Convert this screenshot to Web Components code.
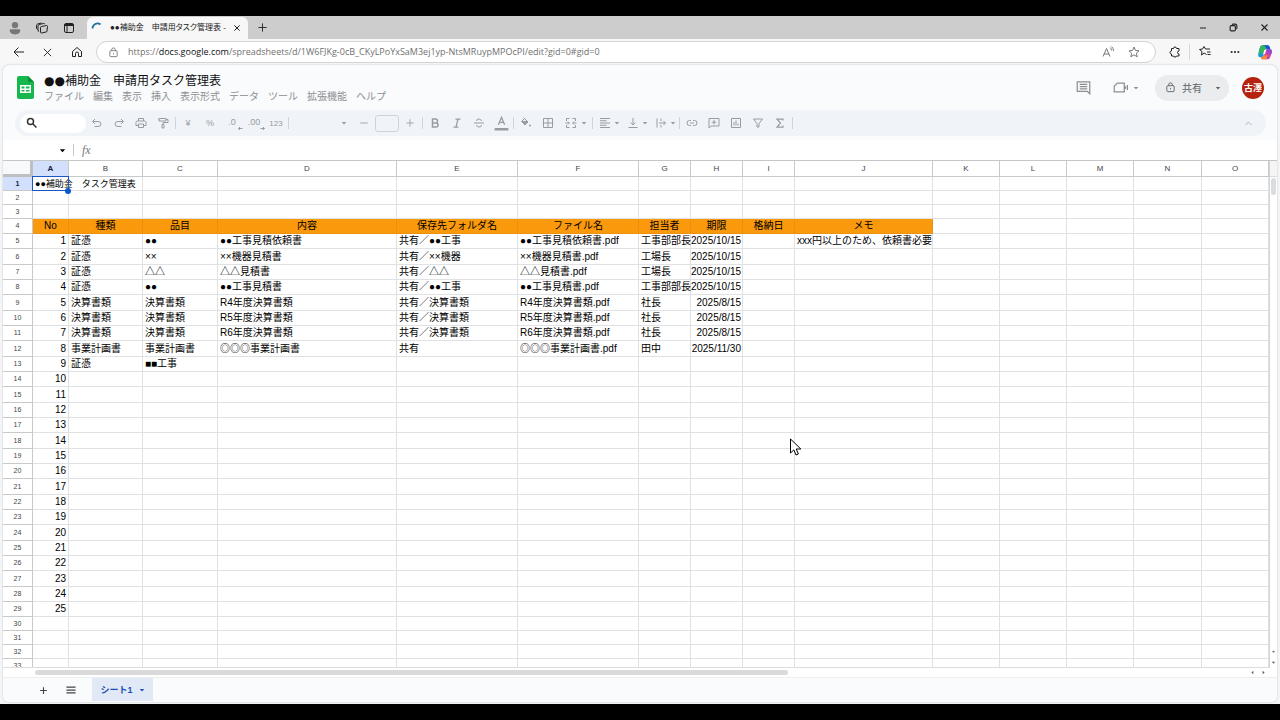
<!DOCTYPE html>
<html lang="ja">
<head>
<meta charset="utf-8">
<meta name="viewport" content="width=device-width, initial-scale=1">
<title>●●補助金　申請用タスク管理表</title>
<style>
    body {
        margin: 0;
        padding: 16px 0;
        box-sizing: border-box;
        height: 100vh;
        background: #000;
        overflow: hidden;
        font-family: "Liberation Sans", "Noto Sans CJK JP", sans-serif;
        font-size: 10px;
        color: #000;
    }

    mouse-cursor {
        position: absolute;
        left: 789px;
        top: 438px;
    }
</style>
</head>
<body>
<browser-frame>
    <tab-strip slot="tabs"></tab-strip>
    <address-bar slot="address"></address-bar>
    <sheet-header></sheet-header>
    <sheet-toolbar></sheet-toolbar>
    <formula-bar></formula-bar>
    <sheet-grid></sheet-grid>
    <sheet-tabs></sheet-tabs>
</browser-frame>
<mouse-cursor></mouse-cursor>

<script>
// all icons sit on a 24x24 grid, stroke based unless a fill is given
const icons = {
    person: `<circle cx="12" cy="7" r="5.5" fill="#777" stroke="none"/><path d="M3 16q0-2 2-2h14q2 0 2 2 0 7-9 7t-9-7z" fill="#777" stroke="none"/>`,
    workspaces: `<path d="M11 9l10-2q2 0 2 2l-1 9q0 2-2 2l-9 2q-2 0-2-2V11q0-2 2-2zM6 19q-2 0-2-3V8q0-2 2-3l9-2q2 0 3 1M3 15q-2-1-2-3V7q0-2 2-3l8-2"/>`,
    tabactions: `<rect x="3" y="3" width="18" height="18" rx="3"/><path d="M3 7h18M8 8v13" /><path d="M3 6h18" stroke-width="4"/>`,
    spinner: `<path d="M3 13a10 10 0 0 1 16-8" stroke="#1d6f9f" stroke-width="3.5"/>`,
    close: `<path d="M4 4l16 16M20 4 4 20"/>`,
    plus: `<path d="M12 3v18M3 12h18"/>`,
    minus: `<path d="M3 12h18"/>`,
    restore: `<rect x="3" y="7" width="14" height="14" rx="3"/><path d="M8 4q1-1 3-1h5q5 0 5 5v5q0 2-1 3"/>`,
    back: `<path d="M22 12H2M11 3l-9 9 9 9"/>`,
    home: `<path d="M3 11l9-8 9 8v10h-6v-6q0-3-3-3t-3 3v6H3z"/>`,
    lock: `<rect x="4" y="8" width="16" height="13" rx="2"/><path d="M8 8V6q0-4 4-4t4 4v2M12 13v3"/>`,
    readaloud: `<path d="M2 21 9 5l7 16M4 16h10M16 3q3 2 3 6M19 1q4 3 4 9"/>`,
    star: `<path d="M12 2l3 7 7 .6-5.300 4.700 1.700 7.200L12 17.600 5.600 21.500 7.300 14.300 2 9.600 9 9z"/>`,
    extension: `<path d="M5 5h4q0-3 3-3t3 3h5v5q-3 0-3 3t3 3v4h-5q0 2-3 2t-3-2H5v-4q-3 0-3-3t3-3z"/>`,
    favorites: `<path d="M15 17l-5-3-5 4 1-7-5-4 6-1 3-5 3 5h9M16 12h7M17 17h6"/>`,
    more: `<g fill="currentColor" stroke="none"><circle cx="4" cy="12" r="2.500"/><circle cx="12" cy="12" r="2.500"/><circle cx="20" cy="12" r="2.500"/></g>`,
    copilot: `<g stroke="none"><path d="M8 2h8q2 0 3 4l1 2h-5q-2 0-3 3l-2 6q-1 3-4 3H5q-4 0-3-5l2-9q1-4 4-4z" fill="#159bd8"/><path d="M4 7q1-5 5-5h6l-3 7-3 5H2z" fill="#35b65c"/><path d="M8 2h8q3 0 4 6h-5l-2-3q-1-3-5-3z" fill="#1456c8"/><path d="M15 8h5q3 0 2 5l-2 6q-1 4-4 4H8q-2 0-2-3 3 0 4-3l2-6q1-3 3-3z" fill="#d63fa5"/><path d="M6 20q3 0 4-3h6l-2 6H8q-2 0-2-3z" fill="#f38b35"/><path d="M15 8h5q3 0 2 5l-1 3-5-3z" fill="#8b4bd8"/><path d="m11 9 3-1-2 7-3 1z" fill="#fff"/></g>`,
    comment: `<path d="M2 3h20v19l-4-4H2zM6 7h12M6 10.500h12M6 14h12"/>`,
    meet: `<path d="M7 5h11v14H2v-9zM20 10v4M23 8v8"/>`,
    caret: `<path d="M3 8h18l-9 10z" fill="currentColor" stroke="none"/>`,
    search: `<circle cx="9" cy="9" r="6"/><path d="M14 14l7 7"/>`,
    undo: `<path d="M8 4 3 9l5 5M3 9h11q6 0 6 5t-6 5H7"/>`,
    redo: `<path d="M16 4l5 5-5 5M21 9H10q-6 0-6 5t6 5h7"/>`,
    print: `<path d="M7 8V3h10v5M7 17H2v-6q0-3 3-3h14q3 0 3 3v6h-5M7 14h10v7H7z"/>`,
    paint: `<path d="M4 3h14v5H4zM18 5h4v6H12v4M10 15h4v7h-4zM4 5H2"/>`,
    dec: `<path d="M23 19h-8m3-3-3 3 3 3"/>`,
    inc: `<path d="M15 19h8m-3-3 3 3-3 3"/>`,
    bold: `<path d="M7 4h6q4 0 4 4t-4 4H7zm0 8h7q4 0 4 4t-4 4H7z" stroke-width="3"/>`,
    italic: `<path d="M9 4h10M5 20h10M14 4l-4 16" stroke-width="2.500"/>`,
    strike: `<path d="M2 12h20M17 8q-1-4-5-4-5 0-5 4M7 16q1 4 5 4 5 0 5-4"/>`,
    textcolor: `<path d="M7 14 12 2l5 12M9 10h6"/><path d="M1 21h22" stroke-width="4"/>`,
    fill: `<path d="M7 1l9 9-6 6-7-7 6-6M4 9h11" /><path d="M4 10h11l-5 5z" fill="currentColor"/><circle cx="20" cy="17" r="2" fill="currentColor" stroke="none"/>`,
    borders: `<path d="M3 3h18v18H3zM12 3v18M3 12h18"/>`,
    merge: `<path d="M9 3H3v5M15 3h6v5M9 21H3v-5M15 21h6v-5M1 12h7M6 9l3 3-3 3M23 12h-7M18 9l-3 3 3 3"/>`,
    align: `<path d="M2 3h20M2 7.500h13M2 12h20M2 16.500h13M2 21h20"/>`,
    valign: `<path d="M12 2v13M7 11l5 5 5-5M3 21h18"/>`,
    wrap: `<path d="M4 3v18M12 3v5M12 16v5M8 12h13M17 8l4 4-4 4"/>`,
    link: `<path d="M10 7H7q-5 0-5 5t5 5h3M14 7h3q5 0 5 5t-5 5h-3M8 12h8"/>`,
    addcomment: `<path d="M2 3h20v15H6l-4 4zM12 6v9M7.500 10.500h9"/>`,
    chart: `<path d="M3 3h18v18H3zM8 10v7M12 7v10M16 13v4"/>`,
    filter: `<path d="M3 4h18l-7 9v7h-4v-7z"/>`,
    sigma: `<path d="M18 7V4H6l7 8-7 8h12v-3" stroke-width="2.500"/>`,
    up: `<path d="M4 16l8-8 8 8"/>`,
    menu: `<path d="M1 5h22M1 12h22M1 19h22"/>`,
    left: `<path d="M16 4v16l-9-8z" fill="currentColor" stroke="none"/>`,
    right: `<path d="M8 4v16l9-8z" fill="currentColor" stroke="none"/>`,
    triup: `<path d="M4 16h16l-8-9z" fill="currentColor" stroke="none"/>`
};

class UiIcon extends HTMLElement {
    connectedCallback() {
        const size = this.getAttribute("size") || 12;
        this.attachShadow({ mode: "open" }).innerHTML = `
            <style>
                :host { display: inline-block; flex: none; line-height: 0; }
                svg { fill: none; stroke: currentColor; stroke-width: ${this.getAttribute("weight") || 2}; display: block; }
            </style>
            <svg width="${size}" height="${size}" viewBox="0 0 24 24" aria-hidden="true">${icons[this.getAttribute("name")]}</svg>
        `;
    }
}
customElements.define("ui-icon", UiIcon);

const buttonReset = `
    button {
        display: flex;
        align-items: center;
        justify-content: center;
        margin: 0;
        padding: 0;
        border: 0;
        background: none;
        color: inherit;
        font: inherit;
    }
`;

class BrowserFrame extends HTMLElement {
    constructor() {
        super();
        this.attachShadow({ mode: "open" }).innerHTML = `
            <style>
                :host {
                    display: flex;
                    flex-direction: column;
                    height: 100%;
                    background: #f5f6f7;
                }
                .page {
                    flex: 1;
                    min-height: 0;
                    display: flex;
                    flex-direction: column;
                    margin: 0 3px 2px;
                    border-radius: 6px;
                    background: #f9fbfd;
                    box-shadow: 0 0 2px #bbb;
                    overflow: hidden;
                }
            </style>
            <slot name="tabs"></slot>
            <slot name="address"></slot>
            <main class="page"><slot></slot></main>
        `;
    }
}
customElements.define("browser-frame", BrowserFrame);

class TabStrip extends HTMLElement {
    constructor() {
        super();
        this.attachShadow({ mode: "open" }).innerHTML = `
            <style>
                ${buttonReset}
                :host {
                    display: flex;
                    height: 23px;
                    background: #cdcdcd;
                    color: #222;
                }
                .tools { display: flex; width: 87px; padding-left: 1px; box-sizing: border-box; }
                .tools button { width: 27px; }
                .tab {
                    display: flex;
                    align-items: center;
                    width: 161px;
                    box-sizing: border-box;
                    margin-top: 1px;
                    padding: 0 7px 0 4px;
                    border-radius: 6px 6px 0 0;
                    background: #f7f7f7;
                }
                .title {
                    flex: 1;
                    margin-left: 7px;
                    white-space: nowrap;
                    font-size: 8px;
                    line-height: 12px;
                    font-feature-settings: "palt";
                }
                .new { width: 28px; }
                .window { display: flex; margin-left: auto; }
                .window button { width: 31px; }
            </style>
            <div class="tools">
                <button aria-label="プロファイル"><ui-icon name="person" size="14"></ui-icon></button>
                <button aria-label="ワークスペース"><ui-icon name="workspaces" size="12"></ui-icon></button>
                <button aria-label="タブ操作"><ui-icon name="tabactions" size="12"></ui-icon></button>
            </div>
            <div class="tab">
                <ui-icon name="spinner" size="12"></ui-icon>
                <span class="title">●●補助金　申請用タスク管理表 -</span>
                <button aria-label="タブを閉じる"><ui-icon name="close" size="8" weight="3"></ui-icon></button>
            </div>
            <button class="new" aria-label="新しいタブ"><ui-icon name="plus" size="11"></ui-icon></button>
            <div class="window">
                <button aria-label="最小化"><ui-icon name="minus" size="8" weight="3"></ui-icon></button>
                <button aria-label="元に戻す"><ui-icon name="restore" size="9" weight="3"></ui-icon></button>
                <button aria-label="閉じる"><ui-icon name="close" size="9" weight="3"></ui-icon></button>
            </div>
        `;
    }
}
customElements.define("tab-strip", TabStrip);

class AddressBar extends HTMLElement {
    constructor() {
        super();
        this.attachShadow({ mode: "open" }).innerHTML = `
            <style>
                ${buttonReset}
                :host {
                    display: flex;
                    align-items: center;
                    height: 26px;
                    padding-left: 4px;
                    background: #f7f7f7;
                    color: #222;
                }
                .nav { display: flex; }
                .nav button { width: 29px; }
                .url {
                    flex: 1;
                    display: flex;
                    align-items: center;
                    box-sizing: border-box;
                    height: 22px;
                    margin-left: 5px;
                    padding: 0 8px 0 11px;
                    border: 1px solid #d4d4d4;
                    border-radius: 11px;
                    background: #fff;
                    color: #777;
                }
                .text {
                    flex: 1;
                    margin-left: 9px;
                    font-family: "Open Sans", sans-serif;
                    font-size: 9px;
                    line-height: 14px;
                    text-decoration: none;
                    color: #707070;
                }
                b { font-weight: normal; color: #111; }
                .url button { width: 26px; }
                .side { display: flex; padding-left: 4px; }
                .side button { width: 30px; }
                .side button:first-child { border-right: 1px solid #d8d8d8; }
            </style>
            <div class="nav">
                <button aria-label="戻る"><ui-icon name="back" size="12"></ui-icon></button>
                <button aria-label="中止"><ui-icon name="close" size="11"></ui-icon></button>
                <button aria-label="ホーム"><ui-icon name="home" size="12"></ui-icon></button>
            </div>
            <div class="url">
                <ui-icon name="lock" size="11"></ui-icon>
                <a class="text" href="#gid=0">https://<b>docs.google.com</b>/spreadsheets/d/1W6FJKg-0cB_CKyLPoYxSaM3ej1yp-NtsMRuypMPOcPI/edit?gid=0#gid=0</a>
                <button aria-label="音声で読み上げる"><ui-icon name="readaloud" size="12"></ui-icon></button>
                <button aria-label="お気に入りに追加"><ui-icon name="star" size="12"></ui-icon></button>
            </div>
            <div class="side">
                <button aria-label="拡張機能"><ui-icon name="extension" size="12"></ui-icon></button>
                <button aria-label="お気に入り"><ui-icon name="favorites" size="12"></ui-icon></button>
                <button aria-label="設定など"><ui-icon name="more" size="10"></ui-icon></button>
                <button aria-label="Copilot"><ui-icon name="copilot" size="16"></ui-icon></button>
            </div>
        `;
    }
}
customElements.define("address-bar", AddressBar);

class SheetHeader extends HTMLElement {
    constructor() {
        super();
        const menus = ["ファイル", "編集", "表示", "挿入", "表示形式", "データ", "ツール", "拡張機能", "ヘルプ"];
        this.attachShadow({ mode: "open" }).innerHTML = `
            <style>
                ${buttonReset}
                :host {
                    display: flex;
                    align-items: center;
                    height: 45px;
                    padding: 0 13px 0 14px;
                    color: #8d9093;
                }
                .names { flex: 1; margin-left: 9px; padding-top: 1px; }
                h1 {
                    margin: 0;
                    font-family: "DejaVu Sans", "Noto Sans CJK JP", sans-serif;
                    font-size: 12px;
                    line-height: 18px;
                    font-weight: normal;
                    color: #111;
                }
                nav { display: flex; gap: 9px; line-height: 14px; }
                .logo { display: block; }
                .meet { gap: 5px; margin: 0 16px 0 22px; }
                .share {
                    display: flex;
                    height: 26px;
                    border-radius: 13px;
                    background: #ebecee;
                    color: #5f6367;
                }
                .share button:first-child { width: 52px; padding-left: 5px; gap: 6px; }
                .share button:last-child { width: 22px; }
                .avatar {
                    width: 22px;
                    height: 22px;
                    margin-left: 13px;
                    border-radius: 50%;
                    background: #b5230f;
                    color: #fff;
                    font-size: 9px;
                    font-weight: bold;
                }
            </style>
            <svg class="logo" width="18" height="24" viewBox="0 0 18 24" aria-hidden="true">
                <path d="M2 0h9l6 6v15q0 2-2 2H2q-2 0-2-2V2q0-2 2-2z" fill="#16b84e"/>
                <path d="M11 0l6 6h-6z" fill="#0a8f3b"/>
                <path d="M3 9h11v8H3zm1.500 1.500v2h3v-2zm4.500 0v2h3.500v-2zm-4.500 3.500v1.500h3V14zm4.500 0v1.500h3.500V14z" fill="#fff" fill-rule="evenodd"/>
            </svg>
            <div class="names">
                <h1>●●補助金　申請用タスク管理表</h1>
                <nav>${menus.map(m => `<button>${m}</button>`).join("")}</nav>
            </div>
            <button aria-label="コメント履歴"><ui-icon name="comment" size="15"></ui-icon></button>
            <button class="meet" aria-label="通話"><ui-icon name="meet" size="15"></ui-icon><ui-icon name="caret" size="6"></ui-icon></button>
            <div class="share">
                <button><ui-icon name="lock" size="11"></ui-icon>共有</button>
                <button aria-label="共有オプション"><ui-icon name="caret" size="6"></ui-icon></button>
            </div>
            <button class="avatar">古澤</button>
        `;
    }
}
customElements.define("sheet-header", SheetHeader);

class SheetToolbar extends HTMLElement {
    constructor() {
        super();
        const icon = (name, label) => `<button aria-label="${label}"><ui-icon name="${name}" size="12"></ui-icon></button>`;
        const drop = (name, label, cls = "") => `<button class="drop ${cls}" aria-label="${label}"><ui-icon name="${name}" size="12"></ui-icon><ui-icon name="caret" size="6"></ui-icon></button>`;
        this.attachShadow({ mode: "open" }).innerHTML = `
            <style>
                ${buttonReset}
                :host {
                    display: flex;
                    align-items: center;
                    height: 26px;
                    margin: 0 11px 4px 12px;
                    border-radius: 13px;
                    background: #f0f3f8;
                    color: #999da2;
                    font-size: 9px;
                }
                .search {
                    display: flex;
                    align-items: center;
                    width: 66px;
                    height: 19px;
                    box-sizing: border-box;
                    margin: 0 0 0 5px;
                    padding-left: 6px;
                    border-radius: 10px;
                    background: #fff;
                    color: #333;
                }
                .search input { width: 100%; min-width: 0; border: 0; padding: 0; background: none; font: inherit; }
                button { width: 22px; height: 20px; }
                .drop { width: 28px; gap: 3px; padding-left: 2px; box-sizing: border-box; }
                .drop.wide { width: 32px; gap: 4px; }
                .sep { width: 1px; height: 12px; margin: 0 1px; background: #d0d3d8; }
                .num { position: relative; padding-bottom: 3px; }
                .num ui-icon { position: absolute; right: 0; bottom: 2px; }
                .small { font-size: 8px; }
                .font { display: grid; width: 63px; align-items: center; justify-items: end; }
                .font > * { grid-area: 1 / 1; }
                .font select { width: 100%; height: 18px; border: 0; appearance: none; background: none; }
                .font ui-icon { margin-right: 6px; pointer-events: none; }
                .size { width: 24px; height: 17px; box-sizing: border-box; border: 1px solid #cfd2d6; border-radius: 3px; background: none; padding: 0; }
                .fold { margin-left: auto; margin-right: 7px; }
            </style>
            <label class="search"><ui-icon name="search" size="12" weight="3"></ui-icon><input type="text" aria-label="メニューを検索"></label>
            ${icon("undo", "元に戻す")}${icon("redo", "やり直し")}${icon("print", "印刷")}${icon("paint", "書式を貼り付け")}
            <span class="sep"></span>
            <button>¥</button><button>%</button>
            <button class="num">.0<ui-icon name="dec" size="12"></ui-icon></button>
            <button class="num">.00<ui-icon name="inc" size="12"></ui-icon></button>
            <button class="small">123</button>
            <span class="sep"></span>
            <span class="font"><select aria-label="フォント"><option></option></select><ui-icon name="caret" size="6"></ui-icon></span>
            <button aria-label="フォントサイズを縮小"><ui-icon name="minus" size="10"></ui-icon></button>
            <input class="size" type="text" aria-label="フォントサイズ">
            <button aria-label="フォントサイズを拡大"><ui-icon name="plus" size="10"></ui-icon></button>
            <span class="sep"></span>
            ${icon("bold", "太字")}${icon("italic", "斜体")}${icon("strike", "取り消し線")}
            <button aria-label="テキストの色"><ui-icon name="textcolor" size="15"></ui-icon></button>
            <span class="sep"></span>
            ${icon("fill", "塗りつぶしの色")}${icon("borders", "枠線")}${drop("merge", "セルを結合", "wide")}
            <span class="sep"></span>
            ${drop("align", "水平方向の配置")}${drop("valign", "垂直方向の配置")}${drop("wrap", "テキストの折り返し")}
            <span class="sep"></span>
            ${icon("link", "リンクを挿入")}${icon("addcomment", "コメントを挿入")}${icon("chart", "グラフを挿入")}${icon("filter", "フィルタを作成")}${icon("sigma", "関数")}
            <span class="sep"></span>
            <button class="fold" aria-label="メニューを非表示"><ui-icon name="up" size="9"></ui-icon></button>
        `;
    }
}
customElements.define("sheet-toolbar", SheetToolbar);

class FormulaBar extends HTMLElement {
    constructor() {
        super();
        this.attachShadow({ mode: "open" }).innerHTML = `
            <style>
                :host {
                    display: flex;
                    align-items: center;
                    height: 21px;
                    background: #fff;
                    border-bottom: 1px solid #c4c7c5;
                    box-sizing: border-box;
                }
                input { border: 0; padding: 0; background: none; min-width: 0; font: inherit; }
                .name { width: 56px; }
                .sep { width: 1px; height: 12px; margin: 0 8px 0 7px; background: #c7c7c7; }
                i { font-family: "Liberation Serif", serif; font-size: 12px; line-height: 14px; color: #777; }
                .formula { flex: 1; margin-left: 8px; }
            </style>
            <input class="name" type="text" aria-label="名前ボックス">
            <ui-icon name="caret" size="7"></ui-icon>
            <span class="sep"></span>
            <i>fx</i>
            <input class="formula" type="text" aria-label="数式">
        `;
    }
}
customElements.define("formula-bar", FormulaBar);

const columns = "ABCDEFGHIJKLMNO".split("");
// the last column takes what is left
const widths = [36, 74, 75, 179, 121, 121, 52, 52, 52, 138, 67, 67, 67, 68];
const titles = ["No", "種類", "品目", "内容", "保存先フォルダ名", "ファイル名", "担当者", "期限", "格納日", "メモ"];
const tasks = [
    ["証憑", "●●", "●●工事見積依頼書", "共有／●●工事", "●●工事見積依頼書.pdf", "工事部部長", "2025/10/15", "", "xxx円以上のため、依頼書必要"],
    ["証憑", "××", "××機器見積書", "共有／××機器", "××機器見積書.pdf", "工場長", "2025/10/15"],
    ["証憑", "△△", "△△見積書", "共有／△△", "△△見積書.pdf", "工場長", "2025/10/15"],
    ["証憑", "●●", "●●工事見積書", "共有／●●工事", "●●工事見積書.pdf", "工事部部長", "2025/10/15"],
    ["決算書類", "決算書類", "R4年度決算書類", "共有／決算書類", "R4年度決算書類.pdf", "社長", "2025/8/15"],
    ["決算書類", "決算書類", "R5年度決算書類", "共有／決算書類", "R5年度決算書類.pdf", "社長", "2025/8/15"],
    ["決算書類", "決算書類", "R6年度決算書類", "共有／決算書類", "R6年度決算書類.pdf", "社長", "2025/8/15"],
    ["事業計画書", "事業計画書", "◎◎◎事業計画書", "共有", "◎◎◎事業計画書.pdf", "田中", "2025/11/30"],
    ["証憑", "■■工事"]
];

class SheetGrid extends HTMLElement {
    constructor() {
        super();
        this.attachShadow({ mode: "open" }).innerHTML = `
            <style>
                :host {
                    flex: 1;
                    min-height: 0;
                    display: grid;
                    grid-template-columns: 1fr 8px;
                    grid-template-rows: 1fr 9px;
                    background: #fff;
                }
                .view { overflow: hidden; min-height: 0; border-bottom: 1px solid #dcdcdc; }
                table { width: 100%; table-layout: fixed; border-collapse: separate; border-spacing: 0; }
                tr { height: 14px; }
                tr.tall { height: 15px; }
                tr.tall:nth-child(3n) { height: 16px; }
                th, td {
                    box-sizing: border-box;
                    padding: 0 2px;
                    border: 0 solid #e0e1e2;
                    border-width: 0 1px 1px 0;
                    line-height: 12px;
                    white-space: nowrap;
                    vertical-align: middle;
                }
                th { font-weight: normal; font-size: 7px; color: #444; border-color: #c8caca; }
                thead tr { height: 16px; }
                thead th { font-size: 8px; }
                thead .corner { border: 3px solid #bfbfbf; border-width: 0 3px 3px 0; background: #f8f9fa; }
                .active { background: #d3e0fb; color: #0b1f45; font-weight: bold; }
                .num, .date { text-align: right; }
                .date { padding: 0 1px 0 0; }
                .title td { background: #f9990b; border-color: #e8920f; text-align: center; }
                .title td.plain { background: none; border-color: #e0e1e2; }
                .selected { position: relative; font-size: 9px; }
                .selected::before {
                    content: "";
                    position: absolute;
                    inset: -1px -1px -1px -1px;
                    border: 1px solid #1a56c4;
                }
                .selected::after {
                    content: "";
                    position: absolute;
                    right: -3px;
                    bottom: -4px;
                    width: 6px;
                    height: 6px;
                    border-radius: 50%;
                    background: #0b57d0;
                }
                .vbar {
                    display: flex;
                    flex-direction: column;
                    align-items: center;
                    border-left: 1px solid #d4d4d4;
                    color: #666;
                }
                .vbar::before { content: ""; width: 100%; height: 15px; border-bottom: 1px solid #ddd; background: #f5f5f5; }
                .vthumb { width: 5px; height: 17px; margin: 1px 0 auto; border-radius: 3px; background: #dadce0; }
                .vbar ui-icon { padding: 3px 0; }
                .hbar { display: flex; align-items: center; padding-left: 32px; color: #555; }
                .hthumb { width: 61%; height: 5px; margin-right: auto; border-radius: 3px; background: #dadada; }
                .hbar ui-icon { padding: 0 3px; }
            </style>
            <div class="view">
                <table>
                    <colgroup><col style="width: 30px">${widths.map(w => `<col style="width: ${w}px">`).join("")}<col></colgroup>
                    <thead><tr><th class="corner"></th>${columns.map((c, i) => `<th scope="col"${i ? "" : ' class="active"'}>${c}</th>`).join("")}</tr></thead>
                    <tbody></tbody>
                </table>
            </div>
            <div class="vbar">
                <span class="vthumb"></span>
                <ui-icon name="triup" size="5"></ui-icon>
                <ui-icon name="caret" size="5"></ui-icon>
            </div>
            <div class="hbar">
                <span class="hthumb"></span>
                <ui-icon name="left" size="5"></ui-icon>
                <ui-icon name="right" size="5"></ui-icon>
            </div>
        `;
        const body = this.shadowRoot.querySelector("tbody");
        for (let n = 1; n <= 33; n++) body.append(this.makeRow(n));
    }

    makeRow(n) {
        const row = document.createElement("tr");
        let cells = [];
        if (n === 1) cells = ["●●補助金　タスク管理表"];
        if (n === 4) cells = titles;
        if (n > 4 && n < 30) cells = [n - 4, ...(tasks[n - 5] || [])];
        if (n > 3 && n < 30) row.classList.add("tall");
        if (n === 4) row.classList.add("title");

        const head = document.createElement("th");
        head.scope = "row";
        head.textContent = n;
        if (n === 1) head.className = "active";
        row.append(head);

        columns.forEach((c, i) => {
            const cell = document.createElement("td");
            cell.textContent = cells[i] ?? "";
            if (n === 1 && i === 0) cell.className = "selected";
            if (n === 4 && i >= titles.length) cell.className = "plain";
            if (n > 4 && i === 0) cell.className = "num";
            if (n > 4 && i === 7) cell.className = "date";
            row.append(cell);
        });
        return row;
    }
}
customElements.define("sheet-grid", SheetGrid);

class SheetTabs extends HTMLElement {
    constructor() {
        super();
        this.attachShadow({ mode: "open" }).innerHTML = `
            <style>
                ${buttonReset}
                :host {
                    display: flex;
                    height: 25px;
                    padding-left: 27px;
                    border-top: 1px solid #eceeef;
                    box-sizing: border-box;
                    background: #f9fbfd;
                    color: #444;
                }
                button { width: 27px; }
                .sheet {
                    width: 61px;
                    height: 23px;
                    margin-left: 8px;
                    gap: 6px;
                    background: #e1e9f7;
                    color: #1b4fb3;
                    font-size: 9px;
                    font-weight: bold;
                }
            </style>
            <button aria-label="シートを追加"><ui-icon name="plus" size="9" weight="3"></ui-icon></button>
            <button aria-label="すべてのシート"><ui-icon name="menu" size="10" weight="3"></ui-icon></button>
            <button class="sheet">シート1<ui-icon name="caret" size="6"></ui-icon></button>
        `;
    }
}
customElements.define("sheet-tabs", SheetTabs);

class MouseCursor extends HTMLElement {
    constructor() {
        super();
        this.attachShadow({ mode: "open" }).innerHTML = `
            <style>:host { display: block; pointer-events: none; }</style>
            <svg width="14" height="19" viewBox="0 0 14 19" aria-hidden="true">
                <path d="M1.500 1v14l3.300-3.100 2.200 5.100 2.400-1-2.200-5h4.600z" fill="#fff" stroke="#000"/>
            </svg>
        `;
    }
}
customElements.define("mouse-cursor", MouseCursor);
</script>
</body>
</html>
